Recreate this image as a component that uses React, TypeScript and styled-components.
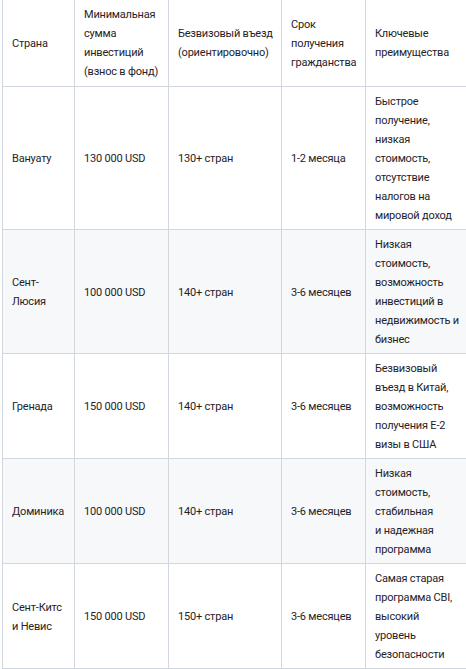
import React from 'react';
import styled, { createGlobalStyle } from 'styled-components';

const GlobalStyle = createGlobalStyle`
   body {
      margin: 0;
      background: #ffffff;
      font-family: Roboto, 'Noto Sans', sans-serif;
      color: #1f2328;
   }
`;

type Row = {
   country: string;
   amount: string;
   visaFree: string;
   term: string;
   benefits: string;
};

// line breaks follow the reference column wrapping
const headers = [
   'Страна',
   'Минимальная\nсумма\nинвестиций\n(взнос в фонд)',
   'Безвизовый въезд\n(ориентировочно)',
   'Срок\nполучения\nгражданства',
   'Ключевые\nпреимущества',
];

const rows: Row[] = [
   {
      country: 'Вануату',
      amount: '130 000 USD',
      visaFree: '130+ стран',
      term: '1-2 месяца',
      benefits: 'Быстрое\nполучение,\nнизкая\nстоимость,\nотсутствие\nналогов на\nмировой доход',
   },
   {
      country: 'Сент-\nЛюсия',
      amount: '100 000 USD',
      visaFree: '140+ стран',
      term: '3-6 месяцев',
      benefits: 'Низкая\nстоимость,\nвозможность\nинвестиций в\nнедвижимость и\nбизнес',
   },
   {
      country: 'Гренада',
      amount: '150 000 USD',
      visaFree: '140+ стран',
      term: '3-6 месяцев',
      benefits: 'Безвизовый\nвъезд в Китай,\nвозможность\nполучения E-2\nвизы в США',
   },
   {
      country: 'Доминика',
      amount: '100 000 USD',
      visaFree: '140+ стран',
      term: '3-6 месяцев',
      benefits: 'Низкая\nстоимость,\nстабильная\nи надежная\nпрограмма',
   },
   {
      country: 'Сент-Китс\nи Невис',
      amount: '150 000 USD',
      visaFree: '150+ стран',
      term: '3-6 месяцев',
      benefits: 'Самая старая\nпрограмма CBI,\nвысокий\nуровень\nбезопасности',
   },
];

const widths = [72, 94, 113, 84, 101];

const App = () => {
   return (
      <>
         <GlobalStyle />
         <Wrapper>
            <Table>
               <colgroup>
                  {widths.map((w, i) => (
                     <col key={i} style={{ width: w }} />
                  ))}
               </colgroup>
               <thead>
                  <tr>
                     {headers.map(h => (
                        <HeadCell key={h}>{h}</HeadCell>
                     ))}
                  </tr>
               </thead>
               <tbody>
                  {rows.map((r, i) => (
                     <BodyRow key={r.country} $striped={i % 2 === 1}>
                        <Cell>{r.country}</Cell>
                        <Cell>{r.amount}</Cell>
                        <Cell>{r.visaFree}</Cell>
                        <Cell>{r.term}</Cell>
                        <Cell>{r.benefits}</Cell>
                     </BodyRow>
                  ))}
               </tbody>
            </Table>
         </Wrapper>
      </>
   );
};

const Wrapper = styled.div`
   padding-left: 2px;
   margin-top: -1px;
`;

const Table = styled.table`
   width: 464px;
   table-layout: fixed;
   border-collapse: collapse;
   font-size: 11px;
   letter-spacing: -0.2px;
   line-height: 19px;
`;

const HeadCell = styled.th`
   border: 1px solid #d0d7de;
   padding: 5px 9px;
   text-align: left;
   font-weight: 400;
   vertical-align: middle;
   white-space: pre;
`;

const BodyRow = styled.tr<{ $striped: boolean }>`
   background-color: ${p => (p.$striped ? '#f6f8fa' : '#ffffff')};
`;

const Cell = styled.td`
   border: 1px solid #d0d7de;
   padding: 5px 9px 4px;
   vertical-align: middle;
   white-space: pre;
`;

export default App;
